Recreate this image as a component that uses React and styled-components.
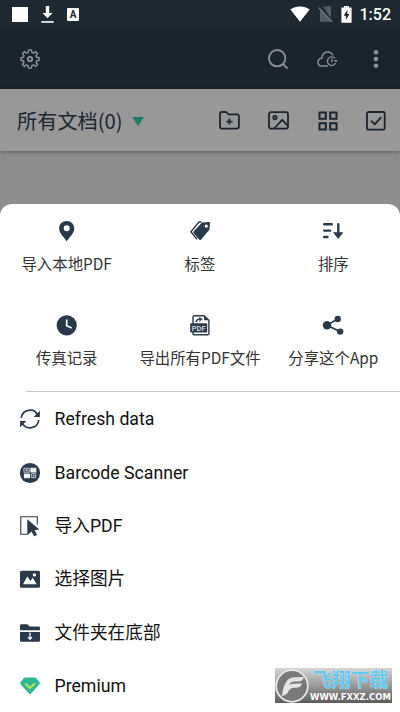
import React from "react";
import styled, { createGlobalStyle } from "styled-components";

const NAVY = "#2b3a4a";
const DIM = "#8c9196";
const INK = "#1b252f";

const Icon = ({ size = 20, width, height, box, children, ...rest }) => (
  <svg
    width={width || size}
    height={height || size}
    viewBox={box || `0 0 ${width || size} ${height || size}`}
    fill="none"
    {...rest}
  >
    {children}
  </svg>
);

const DownloadIcon = () => (
  <Icon width={13} height={17} fill="#fff">
    <path d="M4.8 0h3.4v7h3.3l-5 5.3-5-5.3h3.3z" />
    <path d="M.3 15h12.4v1.9H.3z" fill="#dfe1e3" />
  </Icon>
);

const WifiIcon = () => (
  <Icon width={20} height={16} fill="#fff">
    <path d="M10 15.8L.4 3.6C3 1.4 6.200.4 10 .4s7 1 9.600 3.200z" />
  </Icon>
);

const NoSimIcon = () => (
  <Icon width={15} height={17}>
    <path d="M1.500 3.500L13.600 15.800H2V5zM5 .600H13V12z" fill="#555e66" />
    <path d="M.700 1.600L14 15.600" stroke="#7b8288" strokeWidth="1.300" />
  </Icon>
);

const BatteryIcon = () => (
  <Icon width={11} height={17}>
    <path d="M3 0h5v1.500h2.600V16.700H.400V1.500H3z" fill="#fff" />
    <path d="M6.400 4L2.600 9.700h2.300v4.200l3.500-6H6.400z" fill={INK} />
  </Icon>
);

const GearIcon = () => (
  <Icon stroke={DIM} strokeWidth="1.4" strokeLinejoin="round">
    <path d="M8.600.9h2.800l.5 2.500 1.600.7 2.100-1.500 1.900 1.900-1.500 2.100.7 1.600 2.400.5v2.600l-2.400.5-.7 1.600 1.500 2.100-1.900 1.900-2.100-1.500-1.600.7-.5 2.500H8.600l-.5-2.500-1.600-.7-2.100 1.500-1.900-1.900L4 13.400l-.7-1.600-2.400-.5V8.700l2.400-.5L4 6.600 2.500 4.500l1.900-1.900 2.100 1.500 1.600-.7z" />
    <circle cx="10" cy="10" r="2.200" strokeWidth="1.800" />
  </Icon>
);

const SearchIcon = () => (
  <Icon stroke={DIM} strokeWidth="1.8">
    <circle cx="9.200" cy="9.200" r="8.200" />
    <path d="M15 15l4.500 4.500" />
  </Icon>
);

const CloudIcon = () => (
  <Icon width={21} height={16} stroke={DIM} strokeWidth="1.4">
    <path d="M11 15H5C2.500 15 .900 13.400.900 11.200S2.500 7.500 4.800 7.200C5.300 3.500 7.500 1 10.600 1c2.400 0 4.400 1.200 5.300 3.400" />
    <path d="M17.900 7.300a4.300 4.300 0 1 0 .6 4.900" />
    <path d="M16.700 8.900h4.200l-1.900 2.600z" fill={DIM} stroke="none" />
    <path d="M15 7.800v3.500" strokeWidth="1.300" />
  </Icon>
);

const MoreIcon = () => (
  <Icon width={6} height={20} fill={DIM}>
    <circle cx="3" cy="3.200" r="2.300" />
    <circle cx="3" cy="10" r="2.300" />
    <circle cx="3" cy="16.700" r="2.300" />
  </Icon>
);

const NewFolderIcon = () => (
  <Icon width={21} height={19} stroke={INK} strokeWidth="1.800">
    <path
      d="M1 3q0-2 2-2h4.300l2 2.400h8.600q2 0 2 2v10.200q0 2-2 2H3q-2 0-2-2z"
      strokeLinejoin="round"
    />
    <path d="M10.400 7.600v6M7.400 10.600h6" />
  </Icon>
);

const PhotoIcon = () => (
  <Icon width={21} height={19} stroke={INK} strokeWidth="1.800">
    <rect x="1" y="1.200" width="19" height="16.400" rx="2" />
    <circle cx="6.900" cy="6.600" r="1.700" />
    <path d="M6.200 17.500l8-8.700 5.800 6" />
  </Icon>
);

const TilesIcon = () => (
  <Icon stroke={INK} strokeWidth="2">
    <path d="M1.500 1.500h6.300v6.300H1.500zM12.200 1.500h6.300v6.300h-6.300zM1.500 12.200h6.300v6.300H1.500zM12.200 12.200h6.300v6.300h-6.300z" />
  </Icon>
);

const CheckIcon = () => (
  <Icon stroke={INK} strokeWidth="1.800">
    <rect x="1" y="1" width="17.700" height="17.700" rx="1.500" />
    <path d="M5 9.700l3.700 3.700 6.500-7.300" />
  </Icon>
);

const PinIcon = () => (
  <Icon fill={NAVY}>
    <path
      fillRule="evenodd"
      d="M9.700 0c4.200 0 7.600 3.100 7.600 7.500 0 4.500-4.600 8.500-7.600 12.700C6.700 16 2.100 12 2.100 7.500 2.100 3.100 5.500 0 9.700 0zm0 4.300a3 3 0 1 0 0 6 3 3 0 0 0 0-6z"
    />
  </Icon>
);

const TagsIcon = () => (
  <Icon>
    <path
      fillRule="evenodd"
      d="M12 1.500l7.200-.4q.8 0 .8.800l-.5 6.500L11 18.700q-.8.800-1.600 0l-5.800-6.500q-.7-.8 0-1.600zM16.300 3.500a1.600 1.600 0 1 0 0 3.200 1.600 1.600 0 0 0 0-3.200z"
      fill={NAVY}
    />
    <path d="M11.500 1H9L.9 10.800 7 18.300" stroke={NAVY} strokeWidth="1.400" />
  </Icon>
);

const SortIcon = () => (
  <Icon>
    <path
      d="M1.200 3.300h7.600M1.200 9.600h5.900M1.200 16h3.300M15.300 3.300v9"
      stroke={NAVY}
      strokeWidth="2.400"
      strokeLinecap="round"
    />
    <path d="M10 11.300h10.400l-5.200 6.700z" fill={NAVY} />
  </Icon>
);

const ClockIcon = () => (
  <Icon>
    <circle cx="9.700" cy="10.300" r="10.100" fill={NAVY} />
    <path d="M9.700 4.500v6.300l5 2.300" stroke="#fff" strokeWidth="1.700" />
  </Icon>
);

const PdfIcon = () => (
  <Icon>
    <path
      d="M3 8V2.300Q3 .8 4.500.8H14l4.900 4.500V18.500q0 1.300-1.300 1.300H4.300Q3 19.800 3 18.500z"
      stroke={NAVY}
      strokeWidth="1.400"
    />
    <path d="M14 .8v4.500h4.900z" fill={NAVY} />
    <path d="M6 7q.8-3 4-3" stroke={NAVY} strokeWidth="1.400" />
    <path d="M9.300 2L12.800 4.200 9.300 6.500z" fill={NAVY} />
    <rect x=".2" y="8.300" width="17" height="9.300" rx="1" fill={NAVY} />
    <text
      x="8.700"
      y="15.700"
      fill="#dfe3e6"
      fontFamily="Roboto, sans-serif"
      fontSize="7.500"
      fontWeight="500"
      textAnchor="middle"
    >
      PDF
    </text>
  </Icon>
);

const ShareIcon = () => (
  <Icon fill={NAVY}>
    <path d="M14.500 4L4 10.300l13 6.300" stroke={NAVY} strokeWidth="1.700" fill="none" />
    <circle cx="14.700" cy="4" r="3.200" />
    <circle cx="4" cy="10.300" r="4.200" />
    <circle cx="17.200" cy="16.600" r="3.200" />
  </Icon>
);

const RefreshIcon = () => (
  <Icon stroke={NAVY} strokeWidth="1.700">
    <path d="M1.300 9A8.800 8.800 0 0 1 17.800 5.800M18.700 11A8.800 8.800 0 0 1 2.200 14.200" />
    <path d="M19.900 1.800v6.300h-6.300zM.1 18.200v-6.300h6.300z" fill={NAVY} stroke="none" />
  </Icon>
);

const BarcodeIcon = () => (
  <Icon>
    <circle cx="10" cy="10" r="10.100" fill={NAVY} />
    <path
      d="M3.900 5.300h5.300v3.900H3.900zM11.700 10.700h4v3.900h-4z"
      stroke="#c5cbd0"
      strokeWidth="1"
    />
    <path d="M10.400 4.800h5.900v4.600h-5.900zM5.700 6.600h1.900v1.300H5.700zM13 12h1.400v1.300H13z" fill="#eef0f1" />
    <path d="M3.900 10.600h6.200v4.600H3.900z" fill="#eef0f1" />
  </Icon>
);

const CursorIcon = () => (
  <Icon>
    <path d="M7.500 18.200H.8V.8h16.500v7.700" stroke={NAVY} strokeWidth="1.100" />
    <path d="M7.300 3.300l12 10.300-4.700.7 2.500 4.700-3 1.300-2.600-4.700-4.200 3.700z" fill={NAVY} />
  </Icon>
);

const PictureIcon = () => (
  <Icon>
    <rect y="1.700" width="20" height="17" rx="1.500" fill={NAVY} />
    <path d="M3 15.200l4.300-7.700 3.200 4.600 2.200-3.300 4 6.400z" fill="#fff" />
    <circle cx="14.400" cy="5.900" r="1.700" fill="#fff" />
  </Icon>
);

const FolderDownIcon = () => (
  <Icon>
    <path
      d="M0 7.300V2.600q0-1.300 1.300-1.300h6l2.400 2.200h9q1.300 0 1.300 1.300v2.500zM0 8.900h20v8.600q0 1.300-1.300 1.300H1.300Q0 18.800 0 17.500z"
      fill={NAVY}
    />
    <path d="M10 9.500v6.500M8 14l2 2.300 2-2.300" stroke="#fff" strokeWidth="1.200" />
  </Icon>
);

const PremiumIcon = () => (
  <Icon>
    <path
      d="M5.200 1.500h9.600q.8 0 1.300.6l3.500 4.200q.6.8 0 1.600l-8.500 9.700q-1.100 1.100-2.200 0L.4 7.900q-.6-.8 0-1.600l3.500-4.200q.5-.6 1.300-.6z"
      fill="#31b892"
    />
    <path d="M5.800 8l4.200 4 4.200-4" stroke="#b9e856" strokeWidth="1.800" strokeLinecap="round" />
  </Icon>
);

const WatermarkLogo = () => (
  <Icon size={34}>
    <circle cx="17" cy="17" r="15.800" fill="#77797b" stroke="#e9e9e9" strokeWidth="1.800" />
    <path
      d="M7 27C8 16 12 8.500 19 8.300L29 8c-1 3.300-3 4.500-6 4.500h-4c-3 .2-4 2-4.500 3.500 2-1.300 4-1.500 12.500-1.500-1.500 3.500-3 4.300-6 4.300-4.500 0-6 .7-7.500 3.500C12 25 10 27 7 27z"
      fill="#e4e4e4"
    />
  </Icon>
);

const actions = [
  { label: "导入本地PDF", icon: <PinIcon /> },
  { label: "标签", icon: <TagsIcon /> },
  { label: "排序", icon: <SortIcon /> },
  { label: "传真记录", icon: <ClockIcon /> },
  { label: "导出所有PDF文件", icon: <PdfIcon /> },
  { label: "分享这个App", icon: <ShareIcon /> },
];

const menu = [
  { label: "Refresh data", icon: <RefreshIcon /> },
  { label: "Barcode Scanner", icon: <BarcodeIcon /> },
  { label: "导入PDF", icon: <CursorIcon /> },
  { label: "选择图片", icon: <PictureIcon /> },
  { label: "文件夹在底部", icon: <FolderDownIcon /> },
  { label: "Premium", icon: <PremiumIcon /> },
];

const App = () => (
  <Screen>
    <GlobalStyle />
    <StatusBar>
      <StatusGroup $gap={13}>
        <Square />
        <DownloadIcon />
        <Keyboard>A</Keyboard>
      </StatusGroup>
      <StatusGroup $gap={8}>
        <WifiIcon />
        <NoSimIcon />
        <BatteryIcon />
        <Clock>1:52</Clock>
      </StatusGroup>
    </StatusBar>
    <Header>
      <GearIcon />
      <HeaderActions>
        <SearchIcon />
        <CloudIcon />
        <MoreIcon />
      </HeaderActions>
    </Header>
    <Toolbar>
      <Title>所有文档(0)</Title>
      <Caret />
      <ToolbarActions>
        <NewFolderIcon />
        <PhotoIcon />
        <TilesIcon />
        <CheckIcon />
      </ToolbarActions>
    </Toolbar>
    <Sheet>
      <ActionGrid>
        {actions.map((item) => (
          <Action key={item.label}>
            {item.icon}
            <ActionLabel>{item.label}</ActionLabel>
          </Action>
        ))}
      </ActionGrid>
      <Divider />
      <Menu>
        {menu.map((item) => (
          <MenuRow key={item.label}>
            {item.icon}
            <MenuLabel>{item.label}</MenuLabel>
          </MenuRow>
        ))}
      </Menu>
    </Sheet>
    <Watermark>
      <WatermarkLogo />
      <WatermarkText>
        <WatermarkName>飞翔下载</WatermarkName>
        <WatermarkUrl>WWW.FXXZ.COM</WatermarkUrl>
      </WatermarkText>
    </Watermark>
  </Screen>
);

const GlobalStyle = createGlobalStyle`
  * {
    box-sizing: border-box;
  }
  body {
    margin: 0;
    font-family: Roboto, "Noto Sans CJK SC", sans-serif;
  }
  svg {
    display: block;
    flex-shrink: 0;
    overflow: visible;
  }
`;

const Screen = styled.div`
  position: relative;
  display: flex;
  flex-direction: column;
  width: 400px;
  height: 712px;
  overflow: hidden;
  background: #8d8d8f;
`;

const StatusBar = styled.div`
  display: flex;
  flex-shrink: 0;
  justify-content: space-between;
  align-items: center;
  height: 28px;
  padding: 0 9px 0 12px;
  background: #1e2931;
`;

const StatusGroup = styled.div`
  display: flex;
  align-items: center;
  gap: ${(props) => props.$gap}px;
`;

const Square = styled.div`
  width: 16px;
  height: 15px;
  background: #fff;
`;

const Keyboard = styled.div`
  width: 12px;
  height: 13px;
  border-radius: 1px;
  background: #fff;
  color: #1e2931;
  font-size: 10px;
  font-weight: 700;
  line-height: 13px;
  text-align: center;
`;

const Clock = styled.span`
  padding-top: 1px;
  color: #fff;
  font-size: 16px;
  font-weight: 500;
  line-height: 20px;
`;

const Header = styled.div`
  display: flex;
  flex-shrink: 0;
  justify-content: space-between;
  align-items: center;
  height: 61px;
  padding: 0 21px 0 20px;
  background: #1a242e;
`;

const HeaderActions = styled.div`
  display: flex;
  align-items: center;
  gap: 29px;
  svg:last-child {
    margin-left: 6px;
  }
`;

const Toolbar = styled.div`
  display: flex;
  flex-shrink: 0;
  align-items: center;
  height: 62px;
  padding: 1px 14px 0 17px;
  background: #989898;
  box-shadow: 0 1px 4px rgba(0, 0, 0, 0.35);
`;

const Title = styled.div`
  color: #1b2631;
  font-family: "Noto Sans CJK SC", sans-serif;
  font-size: 20.2px;
  line-height: 28px;
`;

const Caret = styled.div`
  margin: 1px 0 0 9px;
  border: 6px solid transparent;
  border-top: 9px solid #1c7c66;
  border-bottom: 0;
`;

const ToolbarActions = styled.div`
  display: flex;
  align-items: center;
  gap: 28.3px;
  margin-left: auto;
`;

const Sheet = styled.div`
  flex: 1 0 auto;
  margin-top: 53px;
  border-radius: 12px 12px 0 0;
  background: #fff;
`;

const ActionGrid = styled.div`
  display: grid;
  grid-template-columns: repeat(3, 1fr);
  grid-auto-rows: 93.5px;
`;

const Action = styled.div`
  display: flex;
  flex-direction: column;
  align-items: center;
  gap: 10px;
  padding-top: 17px;
`;

const ActionLabel = styled.div`
  color: #333;
  font-family: "Noto Sans CJK SC", sans-serif;
  font-size: 15.4px;
  line-height: 24px;
  white-space: nowrap;
`;

const Divider = styled.div`
  height: 1px;
  margin-left: 26px;
  background: #c8c8c8;
`;

const Menu = styled.div`
  display: flex;
  flex-direction: column;
  padding-top: 0.6px;
`;

const MenuRow = styled.div`
  display: flex;
  align-items: center;
  gap: 14.5px;
  height: 53.4px;
  padding-left: 20px;
`;

const MenuLabel = styled.div`
  color: #111;
  font-size: 17.7px;
  line-height: 26px;
`;

const Watermark = styled.div`
  position: absolute;
  left: 275px;
  top: 668px;
  display: flex;
  align-items: center;
  gap: 1px;
  width: 117px;
  height: 35px;
  background: linear-gradient(#d5d5d5, #a0a0a0 45%, #5c5c5c);
`;

const WatermarkText = styled.div`
  display: flex;
  flex-direction: column;
  align-items: center;
`;

const WatermarkName = styled.div`
  color: #62c8ee;
  font-size: 19px;
  font-weight: 700;
  line-height: 22px;
  text-shadow: 0 0 1px #fff;
`;

const WatermarkUrl = styled.div`
  color: #fff;
  font-family: "DejaVu Sans", sans-serif;
  font-size: 8.5px;
  font-weight: 700;
  line-height: 10px;
`;

export default App;
